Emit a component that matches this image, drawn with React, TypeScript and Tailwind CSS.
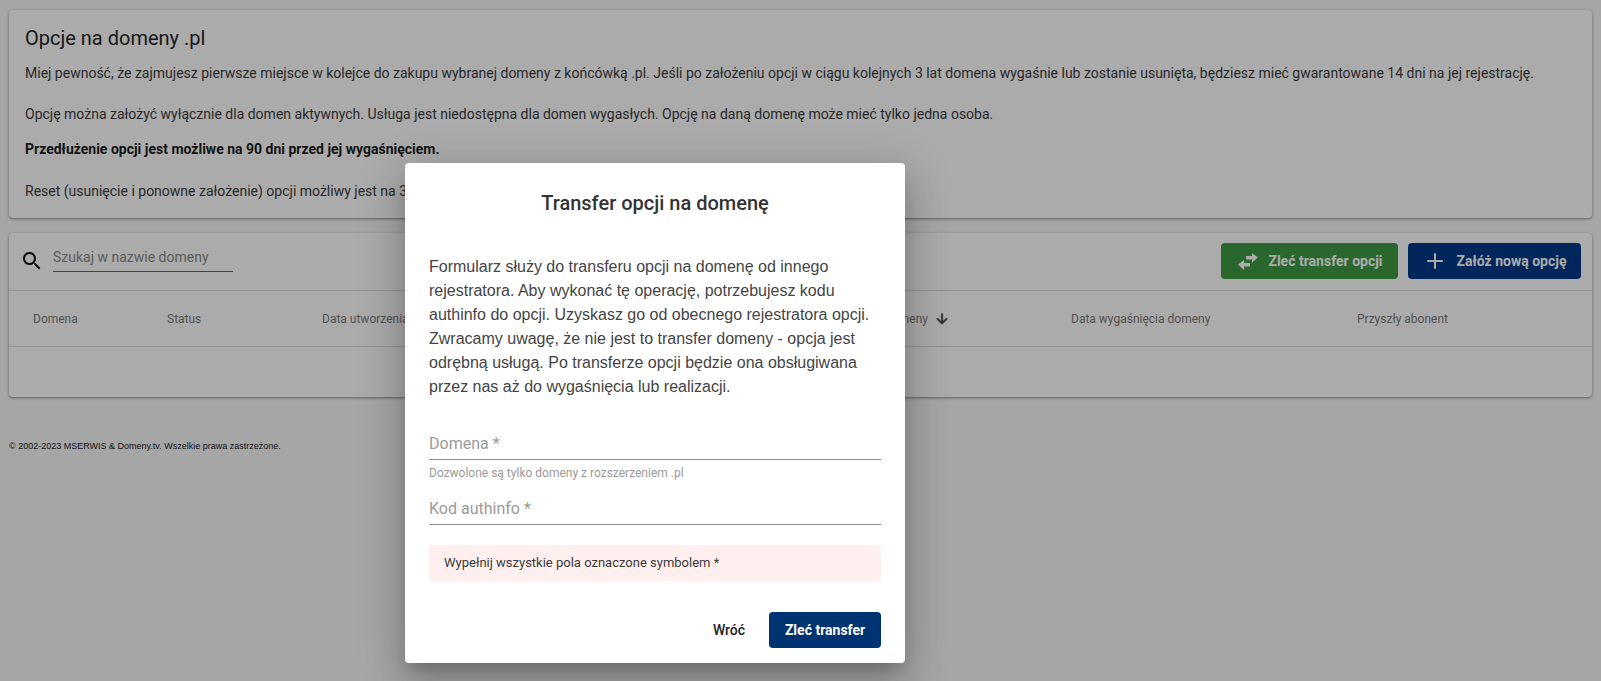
import { Plus } from "lucide-react";

const roboto = "font-['Roboto',sans-serif]";

function TransferIcon() {
  return (
    <svg viewBox="0 0 24 24" className="h-6 w-6" fill="currentColor" aria-hidden="true">
      <path d="M22 8.5 16 4v3h-6v3.5h6v3zM2 15.5 8 11v3h6v3.5H8V21z" />
    </svg>
  );
}

function SearchIcon() {
  return (
    <svg viewBox="0 0 24 24" className="mt-[16px] h-6 w-6 text-[#111]" fill="currentColor" aria-hidden="true">
      <path d="M15.5 14h-.79l-.28-.27C15.41 12.59 16 11.11 16 9.5 16 5.91 13.09 3 9.5 3S3 5.91 3 9.5 5.91 16 9.5 16c1.61 0 3.09-.59 4.23-1.57l.27.28v.79l5 4.99L20.49 19l-4.99-5zm-6 0C7.01 14 5 11.99 5 9.5S7.01 5 9.5 5 14 7.01 14 9.5 11.99 14 9.5 14z" />
    </svg>
  );
}

function ArrowDownIcon() {
  return (
    <svg viewBox="0 0 24 24" className="h-4 w-4 text-[#444]" fill="currentColor" stroke="currentColor" strokeWidth="1" aria-hidden="true">
      <path d="M20 12l-1.41-1.41L13 16.17V4h-2v12.17l-5.58-5.59L4 12l8 8 8-8z" />
    </svg>
  );
}

function Field({ label, helper }: { label: string; helper?: string }) {
  return (
    <div>
      <input
        placeholder={label}
        className="block h-[32px] w-full border-b border-[#8c8c8c] bg-transparent text-base text-[#222] outline-none placeholder:text-[#9a9a9a]"
      />
      {helper && <p className="mt-[6px] h-[14px] text-xs leading-[14px] text-[#9a9a9a]">{helper}</p>}
    </div>
  );
}

export default function App() {
  return (
    <div className={`${roboto} relative h-[681px] overflow-hidden bg-[#f8f8f8] text-[#3c3c3c]`}>
      <main className="flex flex-col px-[9px] pt-[10px]">
        <section className="h-[208px] rounded bg-white px-4 pt-4 text-sm shadow-[0_1px_3px_rgba(0,0,0,0.45)]">
          <h1 className="text-xl leading-6 font-normal text-[#262626]">Opcje na domeny .pl</h1>
          <p className="mt-[13px] h-[40px] leading-[20px]">
            Miej pewność, że zajmujesz pierwsze miejsce w kolejce do zakupu wybranej domeny z końcówką .pl. Jeśli po
            założeniu opcji w ciągu kolejnych 3 lat domena wygaśnie lub zostanie usunięta, będziesz mieć gwarantowane 14
            dni na jej rejestrację.
          </p>
          <p className="mt-[1px] leading-[20px]">
            Opcję można założyć wyłącznie dla domen aktywnych. Usługa jest niedostępna dla domen wygasłych. Opcję na daną
            domenę może mieć tylko jedna osoba.
          </p>
          <p className="mt-[15px] leading-[20px] font-bold text-[#1c1c1c]">
            Przedłużenie opcji jest możliwe na 90 dni przed jej wygaśnięciem.
          </p>
          <p className="mt-[22px] leading-[20px]">
            Reset (usunięcie i ponowne założenie) opcji możliwy jest na 30 dni przed wygaśnięciem.
          </p>
        </section>

        <section className="mt-[15px] h-[164px] rounded bg-white shadow-[0_1px_3px_rgba(0,0,0,0.45)]">
          <div className="flex h-[58px] items-start border-b border-[#d8d8d8] pr-[11px] pl-[11px]">
            <SearchIcon />
            <input
              placeholder="Szukaj w nazwie domeny"
              className="mt-[9px] ml-[9px] h-[30px] w-[180px] border-b border-[#666] bg-transparent text-sm outline-none placeholder:text-[#8a8a8a]"
            />
            <div className="ml-auto flex gap-[10px] pt-[10px]">
              <button className="flex h-9 w-[177px] items-center justify-center gap-2 rounded bg-[#3e9a42] text-sm font-bold text-white">
                <TransferIcon />
                Zleć transfer opcji
              </button>
              <button className="flex h-9 w-[173px] items-center justify-center gap-[10px] rounded bg-[#003a8a] text-sm font-bold text-white">
                <Plus className="h-6 w-6" strokeWidth={2} />
                Załóż nową opcję
              </button>
            </div>
          </div>
          <div className="grid h-[56px] grid-cols-[134px_155px_280px_469px_286px_1fr] items-center border-b border-[#d8d8d8] pl-6 text-xs text-[#7a7a7a]">
            <span>Domena</span>
            <span>Status</span>
            <span>Data utworzenia</span>
            <span className="flex items-center justify-end gap-[6px] pr-[121px]">
              <span>Data realizacji domeny</span>
              <ArrowDownIcon />
            </span>
            <span>Data wygaśnięcia domeny</span>
            <span>Przyszły abonent</span>
          </div>
        </section>

        <footer className="mt-[44px] font-['Liberation_Sans',sans-serif] text-[9px] leading-[11px] text-[#222]">
          © 2002-2023 MSERWIS &amp; Domeny.tv. Wszelkie prawa zastrzeżone.
        </footer>
      </main>

      <div className="absolute inset-0 bg-black/33 pt-[163px] pl-[405px]">
        <div className="flex h-[500px] w-[500px] flex-col rounded bg-white px-6 shadow-[0_11px_15px_-7px_rgba(0,0,0,0.2),0_24px_38px_3px_rgba(0,0,0,0.14),0_9px_46px_8px_rgba(0,0,0,0.12)]">
          <h2 className="mt-6 text-center text-xl leading-8 font-medium text-[#333]">Transfer opcji na domenę</h2>
          <p className="mt-[36px] font-['Liberation_Sans',sans-serif] text-base leading-6 text-[#444]">
            Formularz służy do transferu opcji na domenę od innego rejestratora. Aby wykonać tę operację, potrzebujesz
            kodu authinfo do opcji. Uzyskasz go od obecnego rejestratora opcji. Zwracamy uwagę, że nie jest to transfer
            domeny - opcja jest odrębną usługą. Po transferze opcji będzie ona obsługiwana przez nas aż do wygaśnięcia
            lub realizacji.
          </p>
          <div className="mt-[29px]">
            <Field label="Domena *" helper="Dozwolone są tylko domeny z rozszerzeniem .pl" />
          </div>
          <div className="mt-[13px]">
            <Field label="Kod authinfo *" />
          </div>
          <div className="mt-[20px] flex h-9 items-center rounded bg-[#fff0ef] px-[15px] text-[13px] text-[#3a3a3a]">
            Wypełnij wszystkie pola oznaczone symbolem *
          </div>
          <div className="mt-[31px] flex items-center justify-end">
            <button className="h-9 w-[80px] text-sm font-medium text-[#222]">Wróć</button>
            <button className="h-9 w-[112px] rounded bg-[#003371] text-sm font-bold text-white">Zleć transfer</button>
          </div>
        </div>
      </div>
    </div>
  );
}
